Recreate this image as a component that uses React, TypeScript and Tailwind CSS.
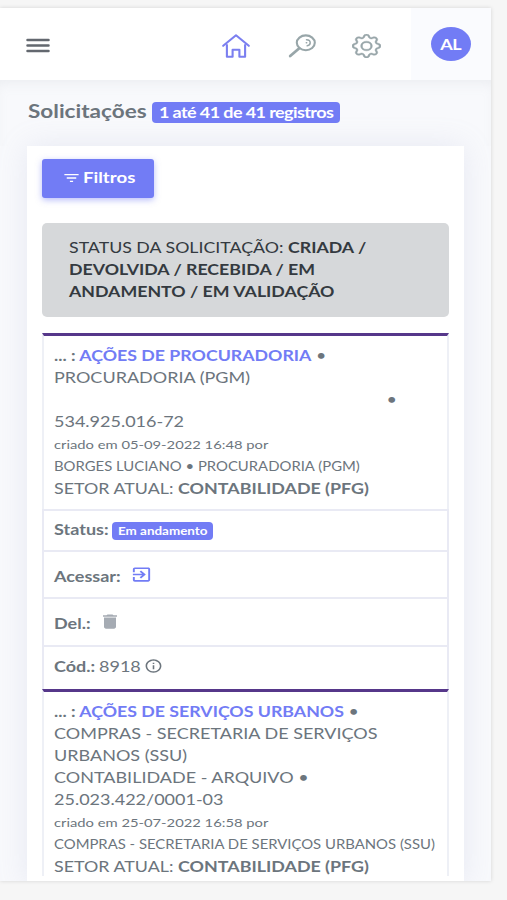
import type { ReactNode } from "react";
import clsx from "clsx";
import { BsGear } from "react-icons/bs";
import { MdDelete, MdExitToApp, MdFilterList, MdInfoOutline } from "react-icons/md";

type RequestItem = {
  title: string;
  lines: ReactNode[];
  createdAt: string;
  author: string;
  sector: string;
};

const requests: RequestItem[] = [
  {
    title: "AÇÕES DE PROCURADORIA",
    lines: [
      "PROCURADORIA (PGM)",
      <span className="pl-[277px]">•</span>,
      "534.925.016-72",
    ],
    createdAt: "05-09-2022 16:48",
    author: "BORGES LUCIANO • PROCURADORIA (PGM)",
    sector: "CONTABILIDADE (PFG)",
  },
  {
    title: "AÇÕES DE SERVIÇOS URBANOS",
    lines: [
      "COMPRAS - SECRETARIA DE SERVIÇOS",
      "URBANOS (SSU)",
      "CONTABILIDADE - ARQUIVO •",
      "25.023.422/0001-03",
    ],
    createdAt: "25-07-2022 16:58",
    author: "COMPRAS - SECRETARIA DE SERVIÇOS URBANOS (SSU)",
    sector: "CONTABILIDADE (PFG)",
  },
];

function Wide({ children, className }: { children: ReactNode; className?: string }) {
  return (
    <div className={clsx("w-fit origin-left scale-x-[1.2] whitespace-nowrap", className)}>
      {children}
    </div>
  );
}

function MenuIcon() {
  return (
    <svg viewBox="0 0 24 16" className="h-4 w-6" fill="none" stroke="#63686f" strokeWidth="2.5" strokeLinecap="round">
      <path d="M1.500 3h21M1.500 8.500h21M1.500 14h21" />
    </svg>
  );
}

function HomeIcon() {
  return (
    <svg viewBox="0 0 28 24" className="h-6 w-7" fill="none" stroke="#7b7ff0" strokeWidth="2.1" strokeLinejoin="round" strokeLinecap="round">
      <path d="M1.200 11.800 14 1.300l12.800 10.500" />
      <path d="M4.900 11v11.700h5.700v-7h6.800v7h5.700V11" />
    </svg>
  );
}

function SearchIcon() {
  return (
    <svg viewBox="0 0 28 24" className="h-6 w-7" fill="none" stroke="#98a6a9" strokeWidth="2.1" strokeLinecap="round">
      <ellipse cx="17.800" cy="8.800" rx="9" ry="7.400" />
      <path d="M11.300 14.200 2.200 22" strokeWidth="2.800" />
      <path d="M18.500 5.700c2.200 0 3.700 1.300 3.700 3.100 0 1.500-1.200 2.800-3 3M18.300 8.800h.4" strokeWidth="1.500" />
    </svg>
  );
}

function Topbar() {
  return (
    <header className="flex h-[72px] bg-white pl-[26px]">
      <div className="flex flex-1 items-center pt-0.5">
        <MenuIcon />
      </div>
      <div className="flex w-[189px] items-center pt-1">
        <div className="w-[66px]"><HomeIcon /></div>
        <div className="w-16"><SearchIcon /></div>
        <BsGear preserveAspectRatio="none" className="h-6 w-[29px] text-[#98a6a9]" stroke="currentColor" strokeWidth="0.25" />
      </div>
      <div className="flex w-20 items-start justify-center bg-[#fafbfe] pt-[19px]">
        <div className="flex h-[34px] w-10 items-center justify-center rounded-[50%] bg-[#727cf5] text-[15px] font-bold text-white">
          <span className="scale-x-[1.2] tracking-[-0.5px]">AL</span>
        </div>
      </div>
    </header>
  );
}

function RequestCard({ item }: { item: RequestItem }) {
  return (
    <div className="h-full border-x-2 border-t-[3px] border-x-[#eef0f6] border-t-[#56378a] pt-2 pl-2.5 text-[15px] leading-[22px]">
      <Wide className="h-[22px] text-[14.8px] font-bold">
        ... : <span className="text-[#727cf5]">{item.title}</span>
        <span className="font-normal"> •</span>
      </Wide>
      {item.lines.map((line, i) => (
        <Wide key={i}>{line}</Wide>
      ))}
      <Wide className="pt-0.5 text-[12.3px]">criado em {item.createdAt} por</Wide>
      <Wide className="text-[12.4px]">{item.author}</Wide>
      <Wide className="text-[14.9px] leading-[20px]">
        SETOR ATUAL: <b>{item.sector}</b>
      </Wide>
    </div>
  );
}

function Row({ label, className, children }: { label: string; className: string; children: ReactNode }) {
  return (
    <div className={clsx("flex items-center border-x-2 border-t-2 border-[#e9eaf4] pl-2.5 text-[15px]", className)}>
      <Wide className="font-bold">{label}</Wide>
      {children}
    </div>
  );
}

export default function App() {
  return (
    <div className="h-[900px] w-[507px] overflow-hidden bg-[#f6f6f6] pt-2 font-['Lato',sans-serif] text-[#6c757d]">
      <div className="h-[873px] w-[491px] overflow-hidden bg-[#f8f9fc] shadow-[0_0_4px_rgba(0,0,0,0.14)]">
        <Topbar />
        <div className="flex h-[66px] items-start pt-[22px] pl-7 shadow-[inset_0_8px_14px_-6px_rgba(154,161,171,0.15)]">
          <div className="w-[124px]">
            <Wide className="text-[18.8px] leading-[18px] font-bold">Solicitações</Wide>
          </div>
          <div className="h-[21px] w-[188px] rounded-[4px] bg-[#727cf5] pl-[7px] text-[15px] leading-[20px] font-bold text-white">
            <Wide className="tracking-[-0.5px]">1 até 41 de 41 registros</Wide>
          </div>
        </div>
        <main className="ml-[27px] h-[740px] w-[437px] bg-white pt-[13px] pl-[15px] shadow-[0_0_28px_rgba(154,161,200,0.18)]">
          <button type="button" className="flex h-[39px] w-28 items-center rounded-[3px] bg-[#727cf5] pb-0.5 pl-5 text-white shadow-[0_2px_6px_rgba(114,124,245,0.5)]">
            <MdFilterList preserveAspectRatio="none" className="h-4 w-[19px]" />
            <Wide className="ml-0.5 text-[15.5px] font-bold">Filtros</Wide>
          </button>
          <section className="mt-[25px] h-[94px] w-[407px] rounded-[5px] bg-[#d6d8da] pt-[13px] pl-[27px] text-[14.8px] leading-[22px] text-[#343a40]">
            <Wide>STATUS DA SOLICITAÇÃO: <b>CRIADA /</b></Wide>
            <Wide className="font-bold">DEVOLVIDA / RECEBIDA / EM</Wide>
            <Wide className="font-bold">ANDAMENTO / EM VALIDAÇÃO</Wide>
          </section>
          <section className="mt-4 w-[407px]">
            <div className="h-[176px]">
              <RequestCard item={requests[0]} />
            </div>
            <Row label="Status:" className="h-[41px] pb-[3px]">
              <div className="mt-[3px] ml-[13px] h-[18px] w-[101px] rounded-[4px] bg-[#727cf5] pl-1.5 text-[11.2px] leading-[17px] font-bold text-white">
                <Wide>Em andamento</Wide>
              </div>
            </Row>
            <Row label="Acessar:" className="h-[47px] pt-[3px]">
              <MdExitToApp preserveAspectRatio="none" className="mb-1 ml-[20px] h-[19px] w-[23px] text-[#727cf5]" />
            </Row>
            <Row label="Del.:" className="h-12 pt-0.5">
              <MdDelete preserveAspectRatio="none" className="mb-[3px] ml-[14px] h-[19px] w-[24px] text-[#a5abb3]" />
            </Row>
            <Row label="Cód.:" className="h-11 pb-1">
              <Wide className="ml-[11px]">8918</Wide>
              <MdInfoOutline preserveAspectRatio="none" className="ml-2.5 h-4 w-[19px]" />
            </Row>
            <RequestCard item={requests[1]} />
          </section>
        </main>
      </div>
    </div>
  );
}
